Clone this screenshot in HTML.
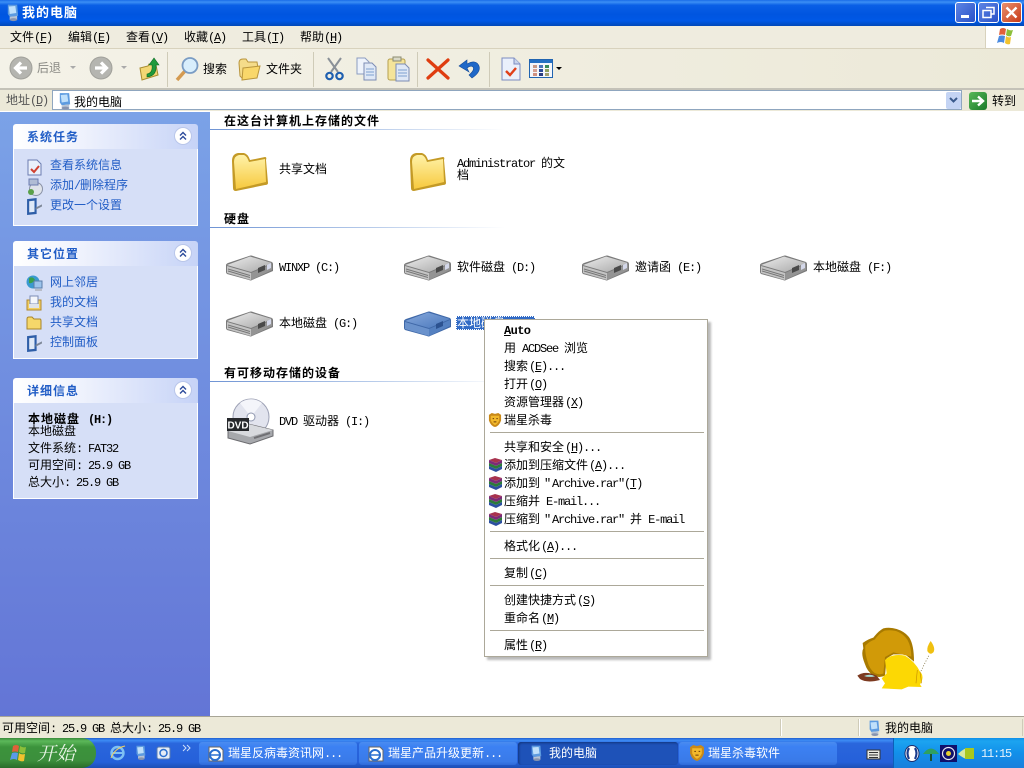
<!DOCTYPE html>
<html lang="zh"><head><meta charset="utf-8"><title>我的电脑</title>
<style>
html,body{margin:0;padding:0;width:1024px;height:768px;overflow:hidden;background:#fff}
body{position:relative;font:12px/12px "WenQuanYi Zen Hei","Noto Sans CJK SC",sans-serif;color:#000}
.a{position:absolute}
.t{position:absolute;white-space:nowrap;line-height:14px;height:14px}
i{font-family:"Liberation Mono",monospace;font-size:12px;letter-spacing:-1.2px;font-style:normal}
i.p{margin-left:1px}
u{text-underline-offset:1px}
b,.bd{font-weight:bold;letter-spacing:1px}
.link{color:#215dc6}
.gr{color:#555}
.panel{position:absolute;left:13px;width:185px}
.ph{height:25px;background:linear-gradient(90deg,#fff 0%,#f0f3fd 35%,#c6d3f7 100%);border-radius:3px 3px 0 0;position:relative}
.ph b{position:absolute;left:14px;top:6px;color:#215dc6;line-height:14px}
.pb{background:#d6dff7;border:1px solid #fff;border-top:0;box-sizing:border-box;position:relative}
.sep{position:absolute;left:490px;width:214px;height:1px;background:#aca899}
.line{position:absolute;left:210px;width:295px;height:1px;background:linear-gradient(90deg,#6f94d4,#b7cbea 55%,#fff)}
.tb{position:absolute;top:742px;height:23px;background:linear-gradient(#4a8cf0,#3c81f3 20%,#3a7ae8 85%,#2f6ad8);border-radius:3px;color:#fff}
svg{position:absolute;overflow:visible}
</style></head><body>
<svg width="0" height="0" style="left:0;top:0">
<defs>
<linearGradient id="fg" x1="0" y1="0" x2="0" y2="1"><stop offset="0" stop-color="#fff2a8"/><stop offset="1" stop-color="#f7c93e"/></linearGradient>
<linearGradient id="dg" x1="0" y1="0" x2="1" y2="1"><stop offset="0" stop-color="#ececec"/><stop offset="1" stop-color="#a8a8a8"/></linearGradient>
<linearGradient id="bg" x1="0" y1="0" x2="1" y2="1"><stop offset="0" stop-color="#86a8dc"/><stop offset="1" stop-color="#4a78bc"/></linearGradient>
<symbol id="folder" viewBox="0 0 38 38"><path d="M2 8Q2 1 8 0L14 0Q18 1 20 7L35 4Q37 4 36 7L38 30Q38 32 35 32L6 38Q3 38 3 35Z" fill="#c49a26"/><path d="M4 9Q4 3 9 2L14 2Q17 3 19 9L35 6L36 29L6 36Z" fill="url(#fg)"/></symbol>
<symbol id="drive" viewBox="0 0 48 26"><path d="M0 10Q0 9 2 8L23 1Q25 0 27 1L46 7Q47 8 47 9L47 16L26 25Q25 26 23 25L1 19Q0 18 0 17Z" fill="#7a7a7a"/><path d="M1 10L24 1.500L46 8L25 17Z" fill="url(#dg)"/><path d="M1 11L25 18L25 25L1 18Z" fill="#c4c4c4"/><path d="M2 14L24 20.500M2 16L24 22.500" stroke="#777" fill="none"/><path d="M25 18L46 9L46 15L25 25Z" fill="#949494"/><path d="M32 13l7-3v5l-7 3z" fill="#4a4a4a"/><path d="M41 10l4-2v5l-4 2z" fill="#d4d8ea"/></symbol>
<symbol id="bluedrive" viewBox="0 0 48 26"><path d="M0 10Q0 9 2 8L23 1Q25 0 27 1L46 7Q47 8 47 9L47 16L26 25Q25 26 23 25L1 19Q0 18 0 17Z" fill="#3f68a8"/><path d="M1 10L24 1.500L46 8L25 17Z" fill="url(#bg)"/><path d="M1 11L25 18L25 25L1 18Z" fill="#6a92cc"/><path d="M25 18L46 9L46 15L25 25Z" fill="#5480c0"/><path d="M32 13l7-3v5l-7 3z" fill="#2c5290"/></symbol>
<symbol id="pc" viewBox="0 0 16 18"><path d="M3 0L13 0L14 12L5 13L3 10Z" fill="#5d9be0"/><path d="M4 2L11 1.500L12 9L5 10Z" fill="#bfe0fb"/><path d="M5 13L13 12L13 16Q9 18 5 16Z" fill="#b8c4d4"/><ellipse cx="9" cy="16" rx="4" ry="1.600" fill="#8794b0"/></symbol>
<symbol id="rar" viewBox="0 0 15 14"><path d="M1 2L7 0L14 2L8 5Z" fill="#a8324e"/><path d="M1 2L8 5L14 2L14 5L8 8L1 5Z" fill="#7c2a78"/><path d="M1 5L8 8L14 5L14 8L8 11L1 8Z" fill="#2c7a3a"/><path d="M1 8L8 11L14 8L14 11L8 14L1 11Z" fill="#2c4fa0"/></symbol>
<symbol id="lion" viewBox="0 0 15 15"><path d="M1 2L4 0L7.500 1L11 0L14 2L14 8Q12 14 7.500 15Q3 14 1 8Z" fill="#c98918"/><path d="M3 3L12 3L12 8Q10 12 7.500 13Q5 12 3 8Z" fill="#f2b92c"/><path d="M5 6h1.500M9 6h1.500M6 9.500h3" stroke="#6b3a0a" fill="none"/></symbol>
<symbol id="chev" viewBox="0 0 18 18"><circle cx="9" cy="9" r="8.500" fill="#fff" stroke="#b9c6ea"/><path d="M6 8.500L9 5.500L12 8.500M6 12.500L9 9.500L12 12.500" fill="none" stroke="#2b4a9a" stroke-width="1.400"/></symbol>
<symbol id="ctl" viewBox="0 0 16 16"><path d="M1 1L10 0L10 15L1 16Z" fill="#2e5ea8"/><path d="M3 3L8 2.500L8 13L3 13.500Z" fill="#dfe9f7"/><path d="M9 9L15 6L15 8L9 11Z" fill="#7d8797"/></symbol>
<symbol id="ie" viewBox="0 0 16 16"><path d="M1 1H12L15 4V15H1Z" fill="#fff" stroke="#666"/><circle cx="7" cy="9" r="5" fill="none" stroke="#2a6fd0" stroke-width="2"/><path d="M3 9H11" stroke="#2a6fd0" stroke-width="1.500"/></symbol>
</defs></svg>

<!-- title bar -->
<div class="a" style="left:0;top:0;width:1024px;height:26px;background:linear-gradient(#1a6ce8 0%,#3c8ff5 8%,#0a5fe6 20%,#0055e0 55%,#0058e6 80%,#0148b8 100%)"></div>
<svg style="left:5px;top:4px" width="15" height="18"><use href="#pc" width="15" height="18"/></svg>
<div class="t bd" style="left:22px;top:5px;color:#fff;font-size:13px">我的电脑</div>
<div class="a" style="left:955px;top:2px;width:19px;height:19px;border:1px solid #fff;border-radius:3px;background:linear-gradient(135deg,#5d84e4,#2a52c8)"></div>
<div class="a" style="left:961px;top:15px;width:8px;height:3px;background:#fff"></div>
<div class="a" style="left:978px;top:2px;width:19px;height:19px;border:1px solid #fff;border-radius:3px;background:linear-gradient(135deg,#5d84e4,#2a52c8)"></div>
<svg style="left:978px;top:2px" width="21" height="21"><path d="M8 5.500H16V12H13M5 8.500H13V15.500H5Z" fill="none" stroke="#fff" stroke-width="1.500"/></svg>
<div class="a" style="left:1001px;top:2px;width:19px;height:19px;border:1px solid #fff;border-radius:3px;background:linear-gradient(135deg,#e8906e,#c83a18)"></div>
<svg style="left:1001px;top:2px" width="21" height="21"><path d="M5.500 5.500L15.500 15.500M15.500 5.500L5.500 15.500" stroke="#fff" stroke-width="2.400"/></svg>

<!-- menu bar -->
<div class="a" style="left:0;top:26px;width:1024px;height:22px;background:#efecdf"></div>
<div class="a" style="left:0;top:48px;width:1024px;height:1px;background:#d8d2bd"></div>
<div class="t" style="left:10px;top:30px">文件<i>(<u>F</u>)</i></div>
<div class="t" style="left:68px;top:30px">编辑<i>(<u>E</u>)</i></div>
<div class="t" style="left:126px;top:30px">查看<i>(<u>V</u>)</i></div>
<div class="t" style="left:184px;top:30px">收藏<i>(<u>A</u>)</i></div>
<div class="t" style="left:242px;top:30px">工具<i>(<u>T</u>)</i></div>
<div class="t" style="left:300px;top:30px">帮助<i>(<u>H</u>)</i></div>
<div class="a" style="left:985px;top:26px;width:39px;height:22px;background:#fff;border-left:1px solid #d8d2bd"></div>
<svg style="left:996px;top:27px" width="20" height="19"><path d="M4 2Q7 0 10 2L9 8Q6 7 3 8Z" fill="#e2603a"/><path d="M11 2Q14 4 17 3L15 9Q12 10 10 8Z" fill="#8cbf3a"/><path d="M3 9Q6 8 9 9L8 16Q5 14 1 16Z" fill="#4a8ae0"/><path d="M10 9Q12 11 15 10L14 17Q11 18 9 16Z" fill="#f2c22e"/></svg>

<!-- toolbar -->
<div class="a" style="left:0;top:49px;width:1024px;height:40px;background:linear-gradient(90deg,#f4f2e8,#ece9d8)"></div>
<div class="a" style="left:0;top:88px;width:1024px;height:2px;background:#c4c2b8"></div>
<svg style="left:9px;top:56px" width="24" height="24"><circle cx="12" cy="12" r="11" fill="#b5b5b0" stroke="#a0a09a"/><path d="M18 12H8M12 6.500L6.500 12L12 17.500" fill="none" stroke="#fff" stroke-width="3.200"/></svg>
<div class="t gr" style="left:37px;top:61px;color:#8a8a84">后退</div>
<svg style="left:70px;top:66px" width="7" height="4"><path d="M0 0H6L3 3Z" fill="#aaa"/></svg>
<svg style="left:89px;top:56px" width="24" height="24"><circle cx="12" cy="12" r="11" fill="#b5b5b0" stroke="#a0a09a"/><path d="M6 12H16M12 6.500L17.500 12L12 17.500" fill="none" stroke="#fff" stroke-width="3.200"/></svg>
<svg style="left:121px;top:66px" width="7" height="4"><path d="M0 0H6L3 3Z" fill="#aaa"/></svg>
<svg style="left:139px;top:57px" width="21" height="24"><path d="M1 11L9 9L10 7L17 8L19 18L3 23Z" fill="#f3d774" stroke="#a88c30"/><path d="M8 17Q14 16 13 8H10L15 1L20 8H17Q18 19 8 20Z" fill="#1f9a3c" stroke="#0c6a24" stroke-width=".6"/></svg>
<div class="a" style="left:167px;top:52px;width:1px;height:35px;background:#cfcbb8"></div>
<svg style="left:175px;top:56px" width="25" height="26"><path d="M2 24L10 15" stroke="#d49a50" stroke-width="3.500"/><circle cx="15" cy="9.500" r="7.500" fill="#d8eefc" stroke="#7a9cc4" stroke-width="1.800"/></svg>
<div class="t" style="left:203px;top:62px">搜索</div>
<svg style="left:238px;top:58px" width="23" height="23"><path d="M1 5Q1 1 5 1L8 1L10 4L19 4L20 10L4 20L2 18Z" fill="#f5dc8a" stroke="#b9953c"/><path d="M5 10L22 8L19 20L4 22Z" fill="#f9d76a" stroke="#b9953c"/></svg>
<div class="t" style="left:266px;top:62px">文件夹</div>
<div class="a" style="left:313px;top:52px;width:1px;height:35px;background:#cfcbb8"></div>
<svg style="left:325px;top:57px" width="19" height="24"><path d="M3 1L13 15M16 1L6 15" stroke="#8a9098" stroke-width="2"/><circle cx="4.500" cy="19" r="3.200" fill="none" stroke="#1f5fb0" stroke-width="2.200"/><circle cx="14.500" cy="19" r="3.200" fill="none" stroke="#1f5fb0" stroke-width="2.200"/></svg>
<svg style="left:356px;top:57px" width="22" height="24"><path d="M1 1H9L13 5V17H1Z" fill="#eef3fb" stroke="#8c9cc0"/><path d="M8 6H16L20 10V23H8Z" fill="#dfe8f6" stroke="#7c8cb4"/><path d="M10 12H18M10 15H18M10 18H18" stroke="#7ca0d0"/></svg>
<svg style="left:387px;top:56px" width="23" height="26"><rect x="1" y="3" width="17" height="21" rx="2" fill="#f5e49a" stroke="#b5a050"/><rect x="6" y="1" width="8" height="4" fill="#d9d9c8" stroke="#8a8a70"/><path d="M9 8H18L22 12V25H9Z" fill="#dfe8f6" stroke="#7c8cb4"/><path d="M11 14H20M11 17H20M11 20H20" stroke="#7ca0d0"/></svg>
<div class="a" style="left:417px;top:52px;width:1px;height:35px;background:#cfcbb8"></div>
<svg style="left:426px;top:58px" width="24" height="22"><path d="M2 2L22 20M22 2L2 20" stroke="#df3d10" stroke-width="3.200" stroke-linecap="round"/></svg>
<svg style="left:458px;top:58px" width="23" height="22"><path d="M1 8L9 2L9 6Q18 1 21 8Q23 14 14 20L11 17Q17 12 15 9Q13 7 9 10L11 14Z" fill="#1f68c8" stroke="#134a98" stroke-width=".6"/></svg>
<div class="a" style="left:489px;top:52px;width:1px;height:35px;background:#cfcbb8"></div>
<svg style="left:501px;top:57px" width="20" height="24"><path d="M1 1H13L19 7V23H1Z" fill="#eaf0fb" stroke="#7c8cc0"/><path d="M13 1V7H19" fill="#c8d4ec" stroke="#7c8cc0"/><path d="M5 14L9 18L15 11" fill="none" stroke="#e0401a" stroke-width="2.400"/></svg>
<svg style="left:529px;top:59px" width="35" height="20"><rect x=".5" y=".5" width="23" height="18" fill="#f4f6fb" stroke="#2164b0"/><rect x="1" y="1" width="22" height="3" fill="#2470c4"/><g><rect x="4" y="6" width="4" height="3" fill="#c89a88"/><rect x="10" y="6" width="4" height="3" fill="#4a74b8"/><rect x="16" y="6" width="4" height="3" fill="#3a8a5a"/><rect x="4" y="10" width="4" height="3" fill="#d8a090"/><rect x="10" y="10" width="4" height="3" fill="#2c4c9a"/><rect x="16" y="10" width="4" height="3" fill="#90a060"/><rect x="4" y="14" width="4" height="3" fill="#d09080"/><rect x="10" y="14" width="4" height="3" fill="#2a3c80"/><rect x="16" y="14" width="4" height="3" fill="#a0a070"/></g><path d="M27 8H33L30 11Z" fill="#000"/></svg>

<!-- address bar -->
<div class="a" style="left:0;top:90px;width:1024px;height:21px;background:#ece9d8"></div>
<div class="t gr" style="left:6px;top:93px">地址<i>(<u>D</u>)</i></div>
<div class="a" style="left:52px;top:90px;width:910px;height:20px;background:#fff;border:1px solid #8fa6bf;box-sizing:border-box"></div>
<svg style="left:57px;top:93px" width="15" height="17"><use href="#pc" width="15" height="17"/></svg>
<div class="t" style="left:74px;top:95px">我的电脑</div>
<div class="a" style="left:946px;top:92px;width:15px;height:17px;background:#c4d4f4;border-radius:2px"></div>
<svg style="left:948px;top:97px" width="11" height="7"><path d="M2 1L5.500 4.500L9 1" fill="none" stroke="#3a5a8c" stroke-width="2"/></svg>
<div class="a" style="left:969px;top:92px;width:18px;height:18px;border-radius:3px;background:linear-gradient(135deg,#58b858,#1a7a2a)"></div>
<svg style="left:969px;top:92px" width="18" height="18"><path d="M3 9H13M9 4.500L14 9L9 13.500" fill="none" stroke="#fff" stroke-width="2.400"/></svg>
<div class="t" style="left:992px;top:94px">转到</div>

<!-- left panel -->
<div class="a" style="left:0;top:112px;width:210px;height:604px;background:linear-gradient(#7ba2e7,#6375d6)"></div>

<div class="panel" style="top:124px">
  <div class="ph"><b>系统任务</b><svg style="left:161px;top:3px" width="18" height="18"><use href="#chev" width="18" height="18"/></svg></div>
  <div class="pb" style="height:77px"></div>
</div>
<svg style="left:27px;top:159px" width="16" height="17"><path d="M1 1H10L14 5V16H1Z" fill="#eaf0fb" stroke="#6c7cb0"/><path d="M4 10L7 13L12 7" fill="none" stroke="#d04030" stroke-width="2"/></svg>
<div class="t link" style="left:50px;top:158px">查看系统信息</div>
<svg style="left:26px;top:178px" width="17" height="18"><circle cx="10" cy="11" r="6.500" fill="#dfe3ea" stroke="#8a92a6"/><rect x="3" y="1" width="9" height="6" fill="#b0bcd4" stroke="#6c7cb0"/><circle cx="5" cy="14" r="3" fill="#5aa04a"/></svg>
<div class="t link" style="left:50px;top:178px">添加<i>/</i>删除程序</div>
<svg style="left:26px;top:198px" width="17" height="17"><use href="#ctl" width="17" height="17"/></svg>
<div class="t link" style="left:50px;top:198px">更改一个设置</div>

<div class="panel" style="top:241px">
  <div class="ph"><b>其它位置</b><svg style="left:161px;top:3px" width="18" height="18"><use href="#chev" width="18" height="18"/></svg></div>
  <div class="pb" style="height:93px"></div>
</div>
<svg style="left:26px;top:275px" width="17" height="17"><circle cx="7" cy="7" r="6.500" fill="#3a9ad0"/><path d="M3 3Q7 1 9 5Q6 9 3 8Z" fill="#3aa04a"/><rect x="8" y="6" width="8" height="7" fill="#9cc4ec" stroke="#5a7ca8"/><rect x="9" y="14" width="7" height="2" fill="#b8bcc8"/></svg>
<div class="t link" style="left:50px;top:275px">网上邻居</div>
<svg style="left:26px;top:295px" width="16" height="16"><path d="M1 5H15V15H1Z" fill="#f2cf62" stroke="#b08a30"/><path d="M4 1H12V9H4Z" fill="#f4f6fb" stroke="#7c8cb4"/><path d="M3 9H13V13H3Z" fill="#dfe3ea"/></svg>
<div class="t link" style="left:50px;top:295px">我的文档</div>
<svg style="left:26px;top:316px" width="16" height="14"><path d="M1 3Q1 1 3 1H6L8 3H14Q15 3 15 5V13H1Z" fill="#f5d76a" stroke="#a8862c"/></svg>
<div class="t link" style="left:50px;top:315px">共享文档</div>
<svg style="left:26px;top:335px" width="17" height="17"><use href="#ctl" width="17" height="17"/></svg>
<div class="t link" style="left:50px;top:335px">控制面板</div>

<div class="panel" style="top:378px">
  <div class="ph"><b>详细信息</b><svg style="left:161px;top:3px" width="18" height="18"><use href="#chev" width="18" height="18"/></svg></div>
  <div class="pb" style="height:96px"></div>
</div>
<div class="t" style="left:28px;top:412px"><b>本地磁盘</b><i style="margin-left:2px;font-weight:bold">&nbsp;(H:)</i></div>
<div class="t" style="left:28px;top:424px">本地磁盘</div>
<div class="t" style="left:28px;top:441px">文件系统<i>:&nbsp;FAT32</i></div>
<div class="t" style="left:28px;top:458px">可用空间<i>:&nbsp;25.9&nbsp;GB</i></div>
<div class="t" style="left:28px;top:475px">总大小<i>:&nbsp;25.9&nbsp;GB</i></div>

<!-- content -->
<div class="t bd" style="left:224px;top:114px">在这台计算机上存储的文件</div>
<div class="line" style="top:129px"></div>
<svg style="left:230px;top:153px" width="38" height="38"><use href="#folder" width="38" height="38"/></svg>
<div class="t" style="left:279px;top:162px">共享文档</div>
<svg style="left:408px;top:153px" width="38" height="38"><use href="#folder" width="38" height="38"/></svg>
<div class="t" style="left:457px;top:156px"><i>Administrator&nbsp;</i>的文</div>
<div class="t" style="left:457px;top:168px">档</div>

<div class="t bd" style="left:224px;top:212px">硬盘</div>
<div class="line" style="top:227px"></div>
<svg style="left:226px;top:255px" width="48" height="26"><use href="#drive" width="48" height="26"/></svg>
<div class="t" style="left:279px;top:260px"><i>WINXP&nbsp;(C:)</i></div>
<svg style="left:404px;top:255px" width="48" height="26"><use href="#drive" width="48" height="26"/></svg>
<div class="t" style="left:457px;top:260px">软件磁盘<i>&nbsp;(D:)</i></div>
<svg style="left:582px;top:255px" width="48" height="26"><use href="#drive" width="48" height="26"/></svg>
<div class="t" style="left:635px;top:260px">邀请函<i>&nbsp;(E:)</i></div>
<svg style="left:760px;top:255px" width="48" height="26"><use href="#drive" width="48" height="26"/></svg>
<div class="t" style="left:813px;top:260px">本地磁盘<i>&nbsp;(F:)</i></div>
<svg style="left:226px;top:311px" width="48" height="26"><use href="#drive" width="48" height="26"/></svg>
<div class="t" style="left:279px;top:316px">本地磁盘<i>&nbsp;(G:)</i></div>
<svg style="left:404px;top:311px" width="48" height="26"><use href="#bluedrive" width="48" height="26"/></svg>
<div class="a" style="left:456px;top:316px;width:79px;height:14px;background:#316ac5;outline:1px dotted #fff;outline-offset:-1px"></div>
<div class="t" style="left:457px;top:316px;color:#fff">本地磁盘</div>

<div class="t bd" style="left:224px;top:366px">有可移动存储的设备</div>
<div class="line" style="top:381px"></div>
<svg style="left:226px;top:398px" width="48" height="46"><circle cx="25" cy="19" r="18" fill="#e2e4ee" stroke="#9ca0b4"/><path d="M25 19L14 5A18 18 0 0 1 36 5Z" fill="#f4f5fa"/><circle cx="25" cy="19" r="4" fill="#fff" stroke="#9098b0"/><path d="M2 33L22 26L47 32L47 38L24 46L2 40Z" fill="#a6a8ac" stroke="#6c6c70"/><path d="M2 33L24 39L47 32L22 26Z" fill="#d8dade"/><path d="M28 40L44 35" stroke="#707074" stroke-width="2"/><rect x="1" y="20" width="22" height="13" fill="#26282c"/><text x="12" y="30.500" text-anchor="middle" fill="#fff" font-family="Liberation Sans" font-size="10" font-weight="bold">DVD</text></svg>
<div class="t" style="left:279px;top:414px"><i>DVD&nbsp;</i>驱动器<i>&nbsp;(I:)</i></div>

<!-- lion -->
<svg style="left:840px;top:615px" width="110" height="85" viewBox="0 0 330 255">
<path d="M68 84Q85 72 100 68Q115 48 130 40Q150 36 170 42Q195 50 208 68Q222 90 222 140L195 118L160 118L140 130L135 182Q118 190 100 182Q82 170 74 145Q62 115 70 100Z" fill="#a87a00"/>
<path d="M76 92Q90 78 104 74Q118 54 134 47Q152 44 168 48Q190 56 202 74Q214 95 214 125L160 112L135 126L130 176Q115 180 104 174Q88 162 82 138Q74 112 76 92Z" fill="#d19a08"/>
<path d="M135 135Q155 115 195 122Q225 140 240 170Q255 185 240 208L245 216L205 215L185 223L125 220L135 205L125 190L140 175Z" fill="#fcd804"/>
<path d="M232 165L228 205M240 170L245 205" stroke="#c89000" fill="none" stroke-width="2"/>
<path d="M52 182Q75 165 110 182L120 195Q80 205 60 192Z" fill="#7c3a20"/>
<path d="M72 183Q90 175 105 184Q85 188 72 183Z" fill="#a8e0d8"/>
<path d="M243 168L268 118" stroke="#6a5a20" stroke-dasharray="3 5" stroke-width="2"/>
<path d="M272 78Q288 100 280 112Q270 122 262 108Q260 95 272 78Z" fill="#f0c010"/>
</svg>

<!-- context menu -->
<div class="a" style="left:487px;top:322px;width:224px;height:338px;background:#808080;opacity:.55;filter:blur(1px)"></div>
<div class="a" style="left:484px;top:319px;width:224px;height:338px;background:#fff;border:1px solid #aca899;box-sizing:border-box"></div>
<div class="t" style="left:504px;top:323px;font-weight:bold"><i style="letter-spacing:-.6px"><u>A</u>uto</i></div>
<div class="t" style="left:504px;top:341px">用<i>&nbsp;ACDSee&nbsp;</i>浏览</div>
<div class="t" style="left:504px;top:359px">搜索<i class="p">(<u>E</u>)...</i></div>
<div class="t" style="left:504px;top:377px">打开<i class="p">(<u>O</u>)</i></div>
<div class="t" style="left:504px;top:395px">资源管理器<i class="p">(<u>X</u>)</i></div>
<svg style="left:488px;top:413px" width="14" height="14"><use href="#lion" width="14" height="14"/></svg>
<div class="t" style="left:504px;top:413px">瑞星杀毒</div>
<div class="sep" style="top:432px"></div>
<div class="t" style="left:504px;top:440px">共享和安全<i class="p">(<u>H</u>)...</i></div>
<svg style="left:488px;top:458px" width="15" height="14"><use href="#rar" width="15" height="14"/></svg>
<div class="t" style="left:504px;top:458px">添加到压缩文件<i class="p">(<u>A</u>)...</i></div>
<svg style="left:488px;top:476px" width="15" height="14"><use href="#rar" width="15" height="14"/></svg>
<div class="t" style="left:504px;top:476px">添加到<i style="margin-left:4px">"</i><i style="margin-left:2px">Archive.rar"(<u>T</u>)</i></div>
<svg style="left:488px;top:494px" width="15" height="14"><use href="#rar" width="15" height="14"/></svg>
<div class="t" style="left:504px;top:494px">压缩并<i>&nbsp;E-mail...</i></div>
<svg style="left:488px;top:512px" width="15" height="14"><use href="#rar" width="15" height="14"/></svg>
<div class="t" style="left:504px;top:512px">压缩到<i style="margin-left:4px">"</i><i style="margin-left:2px">Archive.rar"&nbsp;</i>并<i>&nbsp;E-mail</i></div>
<div class="sep" style="top:531px"></div>
<div class="t" style="left:504px;top:539px">格式化<i class="p">(<u>A</u>)...</i></div>
<div class="sep" style="top:558px"></div>
<div class="t" style="left:504px;top:566px">复制<i class="p">(<u>C</u>)</i></div>
<div class="sep" style="top:585px"></div>
<div class="t" style="left:504px;top:593px">创建快捷方式<i class="p">(<u>S</u>)</i></div>
<div class="t" style="left:504px;top:611px">重命名<i class="p">(<u>M</u>)</i></div>
<div class="sep" style="top:630px"></div>
<div class="t" style="left:504px;top:638px">属性<i class="p">(<u>R</u>)</i></div>

<!-- status bar -->
<div class="a" style="left:0;top:716px;width:1024px;height:22px;background:#ece9d8;border-top:1px solid #a8a596;box-sizing:border-box"></div>
<div class="t" style="left:2px;top:721px">可用空间<i>:&nbsp;25.9&nbsp;GB&nbsp;</i>总大小<i>:&nbsp;25.9&nbsp;GB</i></div>
<div class="a" style="left:781px;top:719px;width:1px;height:17px;background:#fff;box-shadow:-1px 0 #cfcbb8"></div>
<div class="a" style="left:859px;top:719px;width:1px;height:17px;background:#fff;box-shadow:-1px 0 #cfcbb8"></div>
<div class="a" style="left:1022px;top:719px;width:1px;height:17px;background:#cfcbb8"></div>
<svg style="left:867px;top:720px" width="14" height="17"><use href="#pc" width="14" height="17"/></svg>
<div class="t" style="left:885px;top:721px">我的电脑</div>

<!-- taskbar -->
<div class="a" style="left:0;top:738px;width:1024px;height:30px;background:linear-gradient(#1f5fcf 0,#3d8cf5 8%,#2a66dc 18%,#2560da 80%,#1d4fb4 100%)"></div>
<div class="a" style="left:0;top:738px;width:96px;height:30px;border-radius:0 14px 14px 0;background:linear-gradient(#3b8a3b 0,#5cb85a 10%,#3c933c 30%,#3c8f3c 75%,#2a6c2a 100%)"></div>
<svg style="left:10px;top:743px" width="20" height="20"><path d="M3 3Q6 1 9 3L8 9Q5 8 2 9Z" fill="#e0603a"/><path d="M10 3Q13 5 16 4L15 10Q12 11 9 9Z" fill="#8cbf3a"/><path d="M2 10Q5 9 8 10L7 17Q4 15 0 17Z" fill="#5a9ae8"/><path d="M9 10Q11 12 15 11L14 18Q11 19 8 17Z" fill="#f2c22e"/></svg>
<div class="t" style="left:37px;top:743px;font-size:19px;line-height:19px;height:20px;color:#e8f4e4;font-style:italic;font-family:'Noto Serif CJK SC',serif">开始</div>
<svg style="left:109px;top:744px" width="17" height="17"><circle cx="8.500" cy="9" r="6" fill="none" stroke="#7ec0f4" stroke-width="2.400"/><path d="M3 9H14" stroke="#7ec0f4" stroke-width="2"/><path d="M2 14Q6 4 16 2" fill="none" stroke="#f0d060" stroke-width="1"/></svg>
<svg style="left:134px;top:745px" width="13" height="16"><use href="#pc" width="13" height="16"/></svg>
<svg style="left:155px;top:744px" width="17" height="17"><rect x="2" y="3" width="13" height="12" rx="2" fill="#e4ecf6" stroke="#5a7cb0"/><circle cx="8.500" cy="9" r="3.500" fill="none" stroke="#2a6fd0" stroke-width="1.500"/></svg>
<svg style="left:182px;top:744px" width="10" height="8"><path d="M1 1L4 4L1 7M5 1L8 4L5 7" fill="none" stroke="#cfe0fa"/></svg>

<div class="tb" style="left:199px;width:158px"></div>
<svg style="left:208px;top:746px" width="16" height="16"><use href="#ie" width="16" height="16"/></svg>
<div class="t" style="left:228px;top:746px;color:#fff">瑞星反病毒资讯网<i>...</i></div>
<div class="tb" style="left:359px;width:158px"></div>
<svg style="left:368px;top:746px" width="16" height="16"><use href="#ie" width="16" height="16"/></svg>
<div class="t" style="left:388px;top:746px;color:#fff">瑞星产品升级更新<i>...</i></div>
<div class="tb" style="left:518px;width:160px;background:#1e52b8;box-shadow:inset 1px 1px 2px #12357c"></div>
<svg style="left:529px;top:745px" width="14" height="17"><use href="#pc" width="14" height="17"/></svg>
<div class="t" style="left:549px;top:746px;color:#fff">我的电脑</div>
<div class="tb" style="left:679px;width:158px"></div>
<svg style="left:689px;top:745px" width="16" height="16"><use href="#lion" width="16" height="16"/></svg>
<div class="t" style="left:708px;top:746px;color:#fff">瑞星杀毒软件</div>

<svg style="left:867px;top:747px" width="14" height="13"><rect x="0" y="3" width="13" height="9" fill="#e8e8e0" stroke="#333"/><path d="M2 5.500H11M2 8H11M2 10.500H11" stroke="#333"/></svg>

<div class="a" style="left:893px;top:738px;width:131px;height:30px;background:linear-gradient(#0f8ee8 0,#1ca4f0 10%,#1290ea 50%,#1a7fdc 100%);border-left:1px solid #0c5fb8;box-sizing:border-box"></div>
<svg style="left:904px;top:745px" width="16" height="17"><ellipse cx="8" cy="8.500" rx="7" ry="8" fill="#fff" stroke="#1a2c6c"/><path d="M5 3Q2 8 5 14M11 3Q14 8 11 14" fill="none" stroke="#1a3c8c" stroke-width="2.200"/></svg>
<svg style="left:922px;top:746px" width="18" height="16"><path d="M1 8Q9 -3 17 8Z" fill="#2fa060"/><path d="M9 8V15" stroke="#1a5030" stroke-width="2"/></svg>
<svg style="left:940px;top:745px" width="17" height="17"><rect width="17" height="17" fill="#10106c"/><circle cx="8.500" cy="8.500" r="6" fill="none" stroke="#e8e8f0" stroke-width="1.200"/><circle cx="8.500" cy="8.500" r="2.500" fill="#e8d030"/></svg>
<svg style="left:958px;top:746px" width="16" height="15"><path d="M0 8Q6 2 10 2V13Q6 13 0 8Z" fill="#d8e8a0"/><rect x="7" y="2" width="9" height="11" fill="#a8c81e"/></svg>
<div class="t" style="left:981px;top:746px;color:#e4f2fc"><i>11:15</i></div>
</body></html>
